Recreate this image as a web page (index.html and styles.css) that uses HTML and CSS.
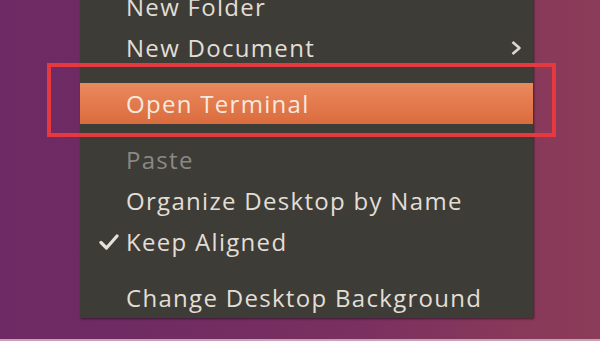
FILE: index.html
```html
<!DOCTYPE html>
<html>
<head>
<meta charset="utf-8">
<link rel="stylesheet" href="styles.css">
</head>
<body>
<div class="desktop">
  <div class="menu">
    <div class="item">New Folder</div>
    <div class="item">New Document<span class="chev">
      <svg width="12" height="16" viewBox="0 0 12 16"><path d="M2.5 2 L9.5 8 L2.5 14" fill="none" stroke="#dcd8cf" stroke-width="2.6" stroke-linejoin="round"/></svg></span></div>
    <div class="sep"></div>
    <div class="item active">Open Terminal</div>
    <div class="sep"></div>
    <div class="item disabled">Paste</div>
    <div class="item">Organize Desktop by Name</div>
    <div class="item"><span class="check">
      <svg width="20" height="16" viewBox="0 0 20 16"><path d="M2 8.5 L7.5 14 L18 2" fill="none" stroke="#e6e2d9" stroke-width="3.2" stroke-linecap="round" stroke-linejoin="round"/></svg></span>Keep Aligned</div>
    <div class="sep"></div>
    <div class="item">Change Desktop Background</div>
  </div>
  <div class="annot"></div>
</div>
</body>
</html>
```
FILE: styles.css
```css
html, body {
  margin: 0;
  padding: 0;
  width: 600px;
  height: 341px;
  overflow: hidden;
}
.desktop {
  position: relative;
  width: 600px;
  height: 341px;
  box-sizing: border-box;
  border-bottom: 2px solid #c7a2b6;
  background: linear-gradient(90deg, #6d2a64 0%, #6f2b63 20%, #7a3060 60%, #88385a 85%, #8b3c58 100%);
  overflow: hidden;
  padding-left: 80px;
}
.menu {
  width: 453px;
  margin-top: -14px;
  background: #3d3c37;
  box-shadow: 1px 1px 2px rgba(20, 10, 20, 0.6);
  font-family: "Open Sans", "Noto Sans", sans-serif;
  font-size: 24px;
  font-weight: 500;
  letter-spacing: 1.3px;
  color: #e2ded5;
}
.item {
  height: 41px;
  display: flex;
  align-items: center;
  padding-left: 46px;
  padding-right: 11px;
  position: relative;
}
.chev {
  margin-left: auto;
  display: flex;
}
.check {
  position: absolute;
  left: 19px;
  top: 13px;
  display: flex;
}
.active {
  background: linear-gradient(180deg, #e98a5e 0%, #e37a4d 50%, #da6c3f 100%);
  color: #f6e9df;
}
.disabled {
  color: #8a8983;
}
.sep {
  height: 15px;
}
.annot {
  position: absolute;
  left: 47px;
  top: 63px;
  width: 509px;
  height: 74px;
  box-sizing: border-box;
  border: 4px solid #e6383f;
}
```
